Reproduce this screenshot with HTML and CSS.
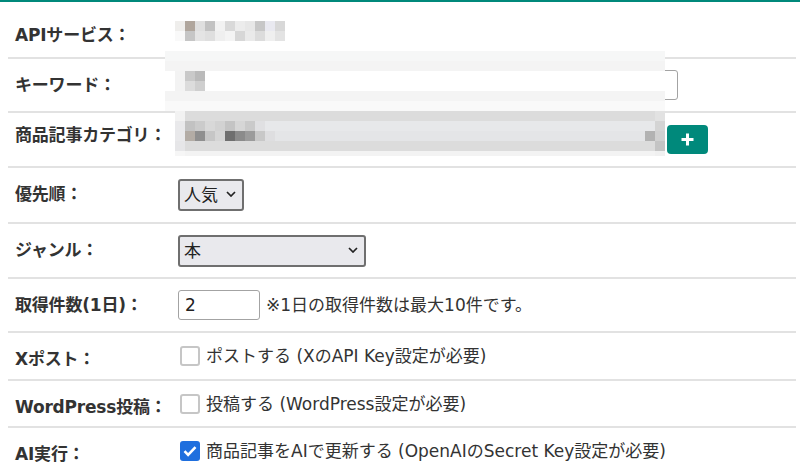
FILE: index.html
```html
<!DOCTYPE html>
<html lang="ja">
<head>
    <meta charset="UTF-8">
    <meta name="viewport" content="width=device-width, initial-scale=1.0">
    <title>自動投稿設定</title>
    <link rel="stylesheet" href="styles.css">
</head>
<body>

    <div class="topbar"></div>

    <form class="settings" id="settingsForm">
        <div class="row row-first">
            <div class="label">APIサービス：</div>
            <div class="value"><span class="pix pix-service"></span></div>
        </div>

        <div class="row">
            <label class="label" for="keyword">キーワード：</label>
            <div class="value">
                <input type="text" id="keyword" name="keyword" class="text-input keyword">
            </div>
        </div>

        <div class="row row-category">
            <div class="label">商品記事カテゴリ：</div>
            <div class="value">
                <select class="select category" name="category">
                    <option>未選択</option>
                </select>
                <button type="button" class="add-btn" title="カテゴリを追加">
                    <svg width="15" height="15" viewBox="0 0 15 15"><path d="M7.5 1.5v12M1.5 7.5h12" stroke="#fff" stroke-width="3"/></svg>
                </button>
            </div>
        </div>

        <div class="row">
            <label class="label" for="sort">優先順：</label>
            <div class="value">
                <span class="select-wrap">
                    <select id="sort" name="sort" class="select sort">
                        <option>人気</option>
                        <option>新着</option>
                    </select>
                    <svg class="chevron" width="10" height="6" viewBox="0 0 10 6"><path d="M1 1l4 4 4-4" fill="none" stroke="#222" stroke-width="1.7"/></svg>
                </span>
            </div>
        </div>

        <div class="row">
            <label class="label" for="genre">ジャンル：</label>
            <div class="value">
                <span class="select-wrap">
                    <select id="genre" name="genre" class="select genre">
                        <option>本</option>
                        <option>家電</option>
                    </select>
                    <svg class="chevron" width="10" height="6" viewBox="0 0 10 6"><path d="M1 1l4 4 4-4" fill="none" stroke="#222" stroke-width="1.7"/></svg>
                </span>
            </div>
        </div>

        <div class="row">
            <label class="label" for="count">取得件数(1日)：</label>
            <div class="value">
                <input type="text" id="count" name="count" class="text-input count" value="2">
                <span class="note">※1日の取得件数は最大10件です。</span>
            </div>
        </div>

        <div class="row">
            <div class="label">Xポスト：</div>
            <label class="value check">
                <span class="box"></span>
                ポストする (XのAPI Key設定が必要)
            </label>
        </div>

        <div class="row">
            <div class="label">WordPress投稿：</div>
            <label class="value check">
                <span class="box"></span>
                投稿する (WordPress設定が必要)
            </label>
        </div>

        <div class="row row-last">
            <div class="label">AI実行：</div>
            <label class="value check">
                <span class="box checked">
                    <svg width="20" height="20" viewBox="0 0 20 20"><path d="M4.5 10.2l3.6 3.6 7.4-7.6" fill="none" stroke="#fff" stroke-width="2.6"/></svg>
                </span>
                商品記事をAIで更新する (OpenAIのSecret Key設定が必要)
            </label>
        </div>

        <!-- mosaic laid over the keyword / category fields -->
        <div class="pix pix-fields"></div>
    </form>

</body>
</html>
```

FILE: styles.css
```css
body {
    margin: 0;
    font-family: "DejaVu Sans", "Noto Sans CJK JP", sans-serif;
    font-size: 17px;
    color: #333;
    background-color: #fff;
}
.topbar {
    height: 2px;
    background-color: #00897b;
}
.settings {
    position: relative;
}
.row {
    display: flex;
    align-items: center;
    margin: 0 4px 0 8px;
    padding: 11px 0 10.6px;
    border-bottom: 2px solid #e2e2e2;
}
.row-first {
    align-items: flex-start;
    padding: 19px 0 10px;
}
.row-last {
    border-bottom: none;
}
.label {
    flex: none;
    width: 163px;
    padding-left: 7px;
    align-self: flex-start;
    margin: 3px 0 -3px;
    font-weight: bold;
    line-height: 24px;
    letter-spacing: -0.2px;
}
.row-first .label {
    margin: 2px 0 0;
}
.row-category .label {
    margin: -1px 0 1px;
}
.value {
    display: flex;
    align-items: center;
    line-height: 24px;
}

/* inputs */
.text-input {
    box-sizing: border-box;
    height: 30px;
    border: 1px solid #a3a3a3;
    border-radius: 3px;
    padding: 0 6px;
    font: inherit;
    color: #222;
}
.keyword {
    width: 500px;
}
.count {
    width: 82px;
}
.note {
    margin-left: 6px;
}

/* selects */
.select {
    appearance: none;
    box-sizing: border-box;
    height: 32px;
    padding: 0 4px;
    border: 2px solid #6f6f6f;
    border-radius: 3px;
    background-color: #e9e9ed;
    font: inherit;
    color: #222;
}
.select-wrap {
    position: relative;
    display: inline-flex;
}
.chevron {
    position: absolute;
    right: 8px;
    top: 12px;
    pointer-events: none;
}
.sort {
    width: 66px;
}
.genre {
    width: 188px;
}
.category {
    width: 487px;
}
.add-btn {
    display: flex;
    align-items: center;
    justify-content: center;
    width: 41px;
    height: 29px;
    margin-left: 2px;
    padding: 0;
    border: none;
    border-radius: 4px;
    background-color: #00897b;
    cursor: pointer;
}

/* checkboxes */
.check {
    cursor: pointer;
}
.box {
    box-sizing: border-box;
    display: inline-flex;
    width: 20px;
    height: 20px;
    margin: 0 6px 0 2px;
    border: 2px solid #c6c6c6;
    border-radius: 3px;
    background-color: #fff;
}
.box.checked {
    border: none;
    background-color: #1f6fde;
}

/* pixel mosaic */
.pix-service {
    display: block;
    width: 110px;
    height: 20px;
    margin-left: -3px;
    background:
        linear-gradient(to right, #efeeec 0 10px, #b0a69d 10px 20px, #dfdfdf 20px 30px, #c2c2c2 30px 40px, #f2f2f2 40px 50px, #d9d9d9 50px 60px, #ececec 60px 70px, #e7e7e7 70px 80px, #c7c7c7 80px 90px, #e9e9f0 90px 100px, #d8d8d8 100px 110px) 0 0 / 110px 10px no-repeat,
        linear-gradient(to right, #f9f9f9 0 10px, #c6c6c6 10px 20px, #e4e4e4 20px 30px, #dfdfdf 30px 40px, #efefef 40px 50px, #f4f4f4 50px 60px, #d7d7d7 60px 70px, #eaeaea 70px 80px, #dcdcdc 80px 90px, #efefef 90px 100px, #e3e3e3 100px 110px) 0 10px / 110px 10px no-repeat;
}
.pix-fields {
    position: absolute;
    left: 165px;
    top: 49px;
    width: 500px;
    height: 105px;
    pointer-events: none;
    background:
        linear-gradient(to right, #c2c2c2 0 10px, #cbcbcb 10px 20px, #d8d8d8 20px 30px, #d2d2d2 30px 40px, #c4c4c4 40px 50px, #d6d6d6 50px 60px, #cacaca 60px 70px, #e0e0e2 70px 80px) 20px 70px / 80px 10px no-repeat,
        linear-gradient(to right, #b3aca5 0 10px, #8f8f8f 10px 20px, #c6c6c6 20px 30px, #d5d5d5 30px 40px, #6f6f6f 40px 50px, #8b8b8b 50px 60px, #9b9b9b 60px 70px, #c8c8c8 70px 80px, #dedee0 80px 90px) 20px 80px / 90px 10px no-repeat,
        linear-gradient(to right, #c9c9c9 0 10px, #bababa 10px 20px) 20px 20px / 20px 10px no-repeat,
        linear-gradient(to right, #dcdcdc 0 10px, #cfcfcf 10px 20px) 20px 30px / 20px 10px no-repeat,
        linear-gradient(#b2b2b2, #b2b2b2) 480px 80px / 10px 10px no-repeat,
        linear-gradient(#e2e2e2 0 10px, #d4d4d4 10px 20px, #d0d0d0 20px 30px, #c4c4c4 30px 40px, #f0f0f0 40px 45px) 490px 60px / 10px 45px no-repeat,
        linear-gradient(#f2f2f2 0 10px, #e9e9eb 10px 30px, #e6e6e8 30px 40px, #f6f6f6 40px 45px) 10px 60px / 10px 45px no-repeat,
        linear-gradient(#dcdcdc 0 10px, #e7e8ea 10px 20px, #e4e5e7 20px 30px, #dcdcdc 30px 40px, #f3f3f3 40px 45px) 10px 60px / 490px 45px no-repeat,
        linear-gradient(#f3f3f3, #f3f3f3) 10px 20px / 10px 20px no-repeat,
        linear-gradient(#f6f7f7 0 10px, #f4f4f4 10px 20px, #fff 20px 40px, #f4f4f4 40px 50px, #f9f9f9 50px 60px) 0 0 / 500px 60px no-repeat;
}
```
